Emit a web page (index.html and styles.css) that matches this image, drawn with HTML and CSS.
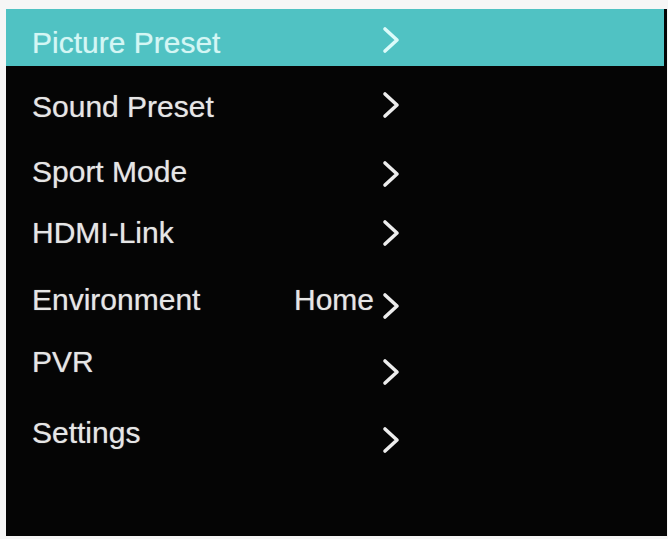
FILE: index.html
```html
<!DOCTYPE html>
<html lang="en">
<head>
<meta charset="utf-8">
<title>Menu</title>
<link rel="stylesheet" href="styles.css">
</head>
<body>
<div class="panel">
  <ul class="menu">
    <li class="row active">
      <div class="main"><span class="label">Picture Preset</span><span class="value"></span>
        <svg class="chev" viewBox="0 0 18 28" width="18" height="28"><polyline points="3,3 15,14 3,25"/></svg></div>
    </li>
    <li class="row">
      <div class="main"><span class="label">Sound Preset</span><span class="value"></span>
        <svg class="chev" viewBox="0 0 18 28" width="18" height="28"><polyline points="3,3 15,14 3,25"/></svg></div>
    </li>
    <li class="row">
      <div class="main"><span class="label">Sport Mode</span><span class="value"></span>
        <svg class="chev" viewBox="0 0 18 28" width="18" height="28"><polyline points="3,3 15,14 3,25"/></svg></div>
    </li>
    <li class="row">
      <div class="main"><span class="label">HDMI-Link</span><span class="value"></span>
        <svg class="chev" viewBox="0 0 18 28" width="18" height="28"><polyline points="3,3 15,14 3,25"/></svg></div>
    </li>
    <li class="row">
      <div class="main"><span class="label">Environment</span><span class="value">Home</span>
        <svg class="chev" viewBox="0 0 18 28" width="18" height="28"><polyline points="3,3 15,14 3,25"/></svg></div>
    </li>
    <li class="row">
      <div class="main"><span class="label">PVR</span><span class="value"></span>
        <svg class="chev" viewBox="0 0 18 28" width="18" height="28"><polyline points="3,3 15,14 3,25"/></svg></div>
    </li>
    <li class="row">
      <div class="main"><span class="label">Settings</span><span class="value"></span>
        <svg class="chev" viewBox="0 0 18 28" width="18" height="28"><polyline points="3,3 15,14 3,25"/></svg></div>
    </li>
  </ul>
</div>
</body>
</html>
```

FILE: styles.css
```css
html, body {
  margin: 0;
  padding: 0;
}
body {
  background: #f6f6f6;
  width: 668px;
  height: 539px;
  overflow: hidden;
  font-family: "Liberation Sans", Arial, sans-serif;
}
.panel {
  margin: 9px 0 0 6px;
  width: 661px;
  height: 527px;
  background: #050505;
}
.menu {
  list-style: none;
  margin: 0;
  padding: 0;
}
.row {
  height: 65px;
  padding-left: 26px;
  color: #e6e6e6;
  text-shadow: 0 0 1px rgba(230, 230, 230, 0.6);
}
.row.active {
  height: 57px;
  width: 632px;
  background: #50c2c3;
  color: #d4f6f4;
  text-shadow: 0 0 1px rgba(212, 246, 244, 0.6);
}
.main {
  width: 368px;
  display: flex;
  align-items: flex-start;
}
.label {
  flex: 1;
  font-size: 30px;
  line-height: 32px;
  margin-top: 25px;
  white-space: nowrap;
}
.value {
  font-size: 30px;
  line-height: 32px;
  margin-top: 25px;
  margin-right: 8px;
}
.chev {
  flex: 0 0 18px;
  margin-top: 25px;
}
.chev polyline {
  fill: none;
  stroke: #ededed;
  stroke-width: 3.6;
  stroke-linecap: round;
  stroke-linejoin: round;
}
.row.active .chev polyline {
  stroke: #dcfbfa;
}

/* per-row vertical tuning */
.row:nth-child(1) .label { margin-top: 18px; }
.row:nth-child(1) .chev { margin-top: 17px; }
.row:nth-child(2) .chev { margin-top: 25px; }
.row:nth-child(3) .chev { margin-top: 29px; }
.row:nth-child(4) .label { margin-top: 21px; }
.row:nth-child(4) .chev { margin-top: 23px; }
.row:nth-child(5) .label,
.row:nth-child(5) .value { margin-top: 23px; }
.row:nth-child(5) .chev { margin-top: 31px; }
.row:nth-child(6) .label { margin-top: 20px; }
.row:nth-child(6) .chev { margin-top: 32px; }
.row:nth-child(7) .label { margin-top: 26px; }
.row:nth-child(7) .chev { margin-top: 35px; }
```
